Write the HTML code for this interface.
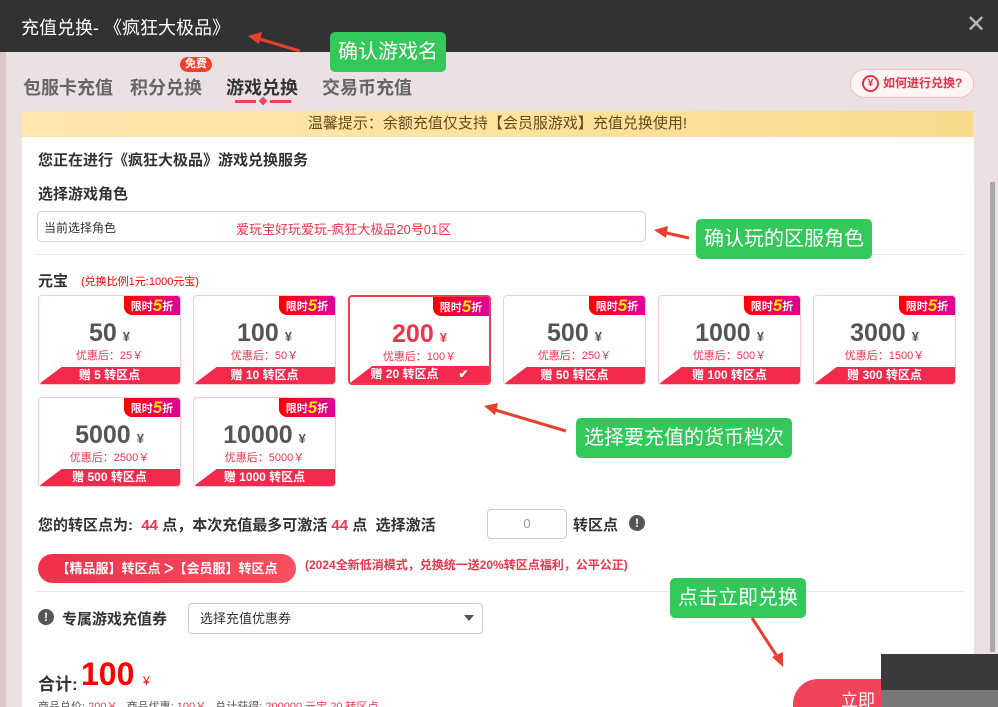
<!DOCTYPE html>
<html style="overflow:hidden;width:998px;height:707px"><head><meta charset="utf-8"><style>
*{margin:0;padding:0;box-sizing:border-box}
body{width:998px;height:707px;overflow:hidden;position:relative;background:#ebe0e2;font-family:"Liberation Sans","Noto Sans CJK SC",sans-serif;color:#333}
.abs{position:absolute}
.top{left:0;top:0;width:998px;height:52px;background:#323234}
.title{left:21px;top:14px;color:#fff;font-size:18px}
.close{left:966px;top:10px;color:#bbb;font-size:24px}
.tab{top:74px;font-size:18px;font-weight:bold;color:#666}
.note{left:22px;top:111px;width:951px;height:26px;background:linear-gradient(90deg,#fde6b0,#fde3a0 50%,#f9d98c);color:#6b4a1a;font-size:15px;text-align:center;line-height:26px}
.card{left:22px;top:137px;width:952px;height:570px;background:#fff}
.t{font-size:15px;font-weight:bold;color:#333}
.green{background:#33c85a;color:#fff;font-size:20px;border-radius:5px;padding:0 8px;line-height:40px;height:40px}
.c{width:143px;height:90px;border:1px solid #fcc8cc;border-radius:4px;background:#fff;overflow:hidden}
.c.sel{border:2px solid #f04050}
.bd{right:0;top:0;width:56px;height:19px;background:linear-gradient(90deg,#f00,#e0009a);border-bottom-left-radius:8px;color:#fff;font-size:11px;font-weight:bold;line-height:19px;text-align:center}
.bd b{color:#ffe600;font-size:17px;font-style:italic;vertical-align:-1px}
.num{left:0;width:100%;top:23px;text-align:center;font-size:25px;font-weight:bold;color:#555}
.num span{font-size:13px;margin-left:6px}
.sel .num{color:#f0344c}
.sub{left:0;width:100%;top:51px;text-align:center;font-size:11px;color:#f0344c}
.bar{left:0;bottom:0;width:100%;height:17px;background:#f32a4c;clip-path:polygon(16% 0,100% 0,100% 100%,0 100%,0 100%);color:#fff;font-size:12px;font-weight:bold;text-align:center;line-height:17px}
</style></head><body>
<div class="abs top"></div>
<div class="abs" style="left:0;top:52px;width:6px;height:655px;background:#d8c8c8"></div>
<div class="abs title">充值兑换- 《疯狂大极品》</div>
<div class="abs close">✕</div>
<div class="abs tab" style="left:23px">包服卡充值</div>
<div class="abs tab" style="left:130px">积分兑换</div>
<div class="abs" style="left:180px;top:57px;background:#f0402e;color:#fff;font-size:11px;font-weight:bold;border-radius:8px;padding:0 5px;line-height:15px">免费</div>
<div class="abs tab" style="left:226px;color:#333">游戏兑换</div>
<div class="abs" style="left:235px;top:100px;width:21px;height:3px;background:#f0405a"></div>
<div class="abs" style="left:260px;top:98px;width:6px;height:6px;background:#f0405a;transform:rotate(45deg)"></div>
<div class="abs" style="left:270px;top:100px;width:21px;height:3px;background:#f0405a"></div>
<div class="abs tab" style="left:322px">交易币充值</div>
<div class="abs" style="left:850px;top:69px;width:124px;height:29px;border:1px solid #f8c0c4;background:#fff4f4;border-radius:15px;color:#e83048;font-size:12px;font-weight:bold;line-height:27px;padding-left:32px">如何进行兑换?</div>
<div class="abs" style="left:862px;top:75px;width:17px;height:17px;border:2px solid #e83048;border-radius:50%;color:#e83048;font-size:10px;font-weight:bold;text-align:center;line-height:13px">¥</div>
<div class="abs note">温馨提示：余额充值仅支持【会员服游戏】充值兑换使用!</div>
<div class="abs card"></div>
<div class="abs" style="left:990px;top:182px;width:5px;height:470px;background:#aaa"></div>
<div class="abs t" style="left:38px;top:149px">您正在进行《疯狂大极品》游戏兑换服务</div>
<div class="abs t" style="left:38px;top:183px">选择游戏角色</div>
<div class="abs" style="left:37px;top:211px;width:609px;height:31px;border:1px solid #d5d5d5;border-radius:5px"></div>
<div class="abs" style="left:44px;top:219px;font-size:12px">当前选择角色</div>
<div class="abs" style="left:236px;top:219px;font-size:13px;color:#f0344c">爱玩宝好玩爱玩-疯狂大极品20号01区</div>
<div class="abs" style="left:36px;top:254px;width:928px;height:1px;background:#e8e8e8"></div>
<div class="abs" style="left:38px;top:270px;font-size:15px;font-weight:bold">元宝</div>
<div class="abs" style="left:81px;top:273px;font-size:11px;color:#f00">(兑换比例1元:1000元宝)</div>

<div class="abs c" style="left:38px;top:295px"><div class="abs bd">限时<b>5</b>折</div><div class="abs num">50<span>¥</span></div><div class="abs sub">优惠后：25￥</div><div class="abs bar">赠 5 转区点</div></div>
<div class="abs c" style="left:193px;top:295px"><div class="abs bd">限时<b>5</b>折</div><div class="abs num">100<span>¥</span></div><div class="abs sub">优惠后：50￥</div><div class="abs bar">赠 10 转区点</div></div>
<div class="abs c sel" style="left:348px;top:295px"><div class="abs bd">限时<b>5</b>折</div><div class="abs num">200<span>¥</span></div><div class="abs sub">优惠后：100￥</div><div class="abs bar">赠 20 转区点 &nbsp; &nbsp; &nbsp;✔</div></div>
<div class="abs c" style="left:503px;top:295px"><div class="abs bd">限时<b>5</b>折</div><div class="abs num">500<span>¥</span></div><div class="abs sub">优惠后：250￥</div><div class="abs bar">赠 50 转区点</div></div>
<div class="abs c" style="left:658px;top:295px"><div class="abs bd">限时<b>5</b>折</div><div class="abs num">1000<span>¥</span></div><div class="abs sub">优惠后：500￥</div><div class="abs bar">赠 100 转区点</div></div>
<div class="abs c" style="left:813px;top:295px"><div class="abs bd">限时<b>5</b>折</div><div class="abs num">3000<span>¥</span></div><div class="abs sub">优惠后：1500￥</div><div class="abs bar">赠 300 转区点</div></div>
<div class="abs c" style="left:38px;top:397px"><div class="abs bd">限时<b>5</b>折</div><div class="abs num">5000<span>¥</span></div><div class="abs sub">优惠后：2500￥</div><div class="abs bar">赠 500 转区点</div></div>
<div class="abs c" style="left:193px;top:397px"><div class="abs bd">限时<b>5</b>折</div><div class="abs num">10000<span>¥</span></div><div class="abs sub">优惠后：5000￥</div><div class="abs bar">赠 1000 转区点</div></div>

<div class="abs" style="left:38px;top:514px;font-size:15px;font-weight:bold">您的转区点为: <span style="color:#f0344c">&nbsp;44</span> 点，本次充值最多可激活 <span style="color:#f0344c">44</span> 点 &nbsp;选择激活</div>
<div class="abs" style="left:487px;top:509px;width:80px;height:30px;border:1px solid #ccc;border-radius:4px;text-align:center;line-height:28px;color:#999;font-size:13px">0</div>
<div class="abs" style="left:573px;top:514px;font-size:15px;font-weight:bold">转区点</div>
<div class="abs" style="left:629px;top:515px;width:16px;height:16px;border-radius:50%;background:#555;color:#fff;font-size:12px;font-weight:bold;text-align:center;line-height:16px">!</div>
<div class="abs" style="left:38px;top:554px;width:258px;height:29px;border-radius:15px;background:linear-gradient(90deg,#f0304c,#f85060);color:#fff;font-size:13px;font-weight:bold;line-height:29px;text-align:center">【精品服】转区点 ᐳ【会员服】转区点</div>
<div class="abs" style="left:305px;top:556px;font-size:12px;font-weight:bold;color:#f0344c">(2024全新低消模式，兑换统一送20%转区点福利，公平公正)</div>
<div class="abs" style="left:36px;top:591px;width:928px;height:1px;background:#e8e8e8"></div>
<div class="abs" style="left:38px;top:609px;width:16px;height:16px;border-radius:50%;background:#555;color:#fff;font-size:12px;font-weight:bold;text-align:center;line-height:16px">!</div>
<div class="abs" style="left:62px;top:608px;font-size:15px;font-weight:bold">专属游戏充值券</div>
<div class="abs" style="left:188px;top:603px;width:295px;height:31px;border:1px solid #ccc;border-radius:4px;font-size:13px;line-height:29px;padding-left:11px">选择充值优惠券</div>
<div class="abs" style="left:464px;top:615px;border:5px solid transparent;border-top:6px solid #555"></div>
<div class="abs" style="left:38px;top:670px;font-size:17px;font-weight:bold">合计:</div>
<div class="abs" style="left:81px;top:656px;font-size:32px;font-weight:bold;color:#f00">100</div>
<div class="abs" style="left:143px;top:674px;font-size:12px;color:#f00">¥</div>
<div class="abs" style="left:38px;top:698px;font-size:11px;color:#555">商品总价: <span style="color:#f0344c">200￥</span> &nbsp; 商品优惠: <span style="color:#f0344c">100￥</span> &nbsp; 总计获得: <span style="color:#f0344c">200000 元宝 20 转区点</span></div>
<div class="abs" style="left:793px;top:679px;width:130px;height:28px;border-radius:25px 25px 0 0;background:#f0445a;color:#fff;font-size:17px;line-height:44px;padding-left:48px;overflow:hidden">立即</div>
<div class="abs" style="left:881px;top:654px;width:117px;height:53px;background:#3a3a3a"></div>
<div class="abs" style="left:881px;top:690px;width:117px;height:17px;background:#777"></div>

<div class="abs green" style="left:330px;top:32px">确认游戏名</div>
<div class="abs green" style="left:696px;top:219px">确认玩的区服角色</div>
<div class="abs green" style="left:576px;top:418px">选择要充值的货币档次</div>
<div class="abs green" style="left:670px;top:578px">点击立即兑换</div>
<svg class="abs" style="left:0;top:0" width="998" height="707">
<g stroke="#e8402a" stroke-width="3" fill="#e8402a">
<line x1="300" y1="51" x2="256" y2="38"/><polygon points="248,36 262,32 259,44" stroke="none"/>
<line x1="689" y1="238" x2="662" y2="232"/><polygon points="654,230 668,226 666,238" stroke="none"/>
<line x1="566" y1="431" x2="492" y2="409"/><polygon points="484,406 498,403 495,415" stroke="none"/>
<line x1="752" y1="618" x2="778" y2="658"/><polygon points="783,667 772,657 783,652" stroke="none"/>
</g></svg>
</body></html>
